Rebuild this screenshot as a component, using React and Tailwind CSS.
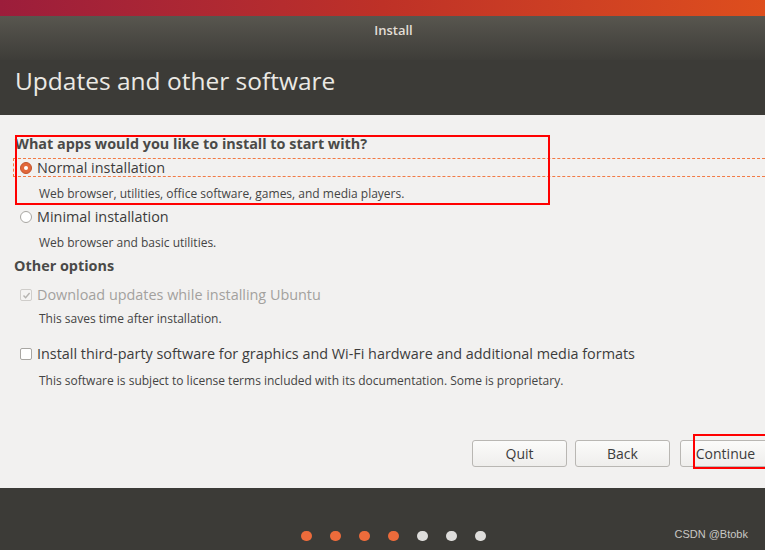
import React from "react";

const font = { fontFamily: '"Open Sans", "DejaVu Sans", sans-serif' };

function Radio({ checked }) {
  if (checked) {
    return (
      <span className="flex h-[12px] w-[12px] items-center justify-center rounded-full border border-[#c2542c] bg-[#e2673a]">
        <span className="h-[4px] w-[4px] rounded-full bg-white" />
      </span>
    );
  }
  return <span className="h-[12px] w-[12px] rounded-full border border-[#a8a6a2] bg-white" />;
}

function Check({ checked, disabled }) {
  return (
    <span
      className={
        "flex h-[12px] w-[12px] items-center justify-center rounded-[2px] border " +
        (disabled ? "border-[#cfcdca] bg-[#f4f3f2]" : "border-[#a8a6a2] bg-white")
      }
    >
      {checked && (
        <svg width="9" height="9" viewBox="0 0 9 9">
          <path d="M1.5 4.6 L3.6 6.8 L7.6 2" fill="none" stroke="#b5b3b0" strokeWidth="1.4" />
        </svg>
      )}
    </span>
  );
}

function Btn({ children, className = "" }) {
  return (
    <div
      className={
        "flex h-[27px] w-[95px] shrink-0 items-center justify-center rounded-[3px] border border-[#b9b7b3] bg-gradient-to-b from-[#fbfbfa] to-[#efeeec] text-[14px] text-[#3c3c3c] " +
        className
      }
    >
      {children}
    </div>
  );
}

export default function App() {
  const dots = ["o", "o", "o", "o", "w", "w", "w"];
  return (
    <div className="flex h-[550px] w-[765px] flex-col overflow-hidden" style={font}>
      <div className="h-[16px] shrink-0 bg-gradient-to-r from-[#9c1d3b] via-[#be3127] to-[#de4e1d]" />
      <div className="flex h-[44px] shrink-0 justify-center bg-gradient-to-b from-[#58564f] to-[#3e3d39] pl-[22px] pt-[5px]">
        <span className="text-[13px] font-semibold text-[#e2ded6]">Install</span>
      </div>
      <div className="flex h-[55px] shrink-0 items-start bg-[#3c3b37] pl-[15px] pt-[4px]">
        <span className="text-[24.5px] leading-[34px] text-[#ebe9e4]">Updates and other software</span>
      </div>
      <div className="relative flex flex-1 flex-col bg-[#f2f1f0] text-[#3c3c3c]">
        <div className="pt-[20px]" />
        <div className="flex h-[18px] items-center pl-[15px] text-[14.4px] font-bold text-[#4a4a48]">
          What apps would you like to install to start with?
        </div>
        <div className="ml-[13px] mr-[-10px] mt-[5px] flex h-[19px] items-center gap-[5px] border border-dashed border-[#f27a45] pl-[6px] pt-[1px] text-[14.4px]">
          <Radio checked />
          <span>Normal installation</span>
        </div>
        <div className="mt-[8px] flex h-[18px] items-center pl-[39px] text-[12px] text-[#444]">
          Web browser, utilities, office software, games, and media players.
        </div>
        <div className="mt-[5px] flex h-[18px] items-center gap-[5px] pl-[20px] text-[14.4px]">
          <Radio />
          <span>Minimal installation</span>
        </div>
        <div className="mt-[8px] flex h-[18px] items-center pl-[39px] text-[12px] text-[#444]">
          Web browser and basic utilities.
        </div>
        <div className="mt-[5px] flex h-[18px] items-center pl-[14px] text-[14.4px] font-bold text-[#4a4a48]">
          Other options
        </div>
        <div className="mt-[11px] flex h-[18px] items-center gap-[5px] pl-[20px] text-[14.4px] text-[#a3a19e]">
          <Check checked disabled />
          <span>Download updates while installing Ubuntu</span>
        </div>
        <div className="mt-[6px] flex h-[18px] items-center pl-[39px] text-[12px] text-[#444]">
          This saves time after installation.
        </div>
        <div className="mt-[17px] flex h-[18px] items-center gap-[5px] pl-[20px] text-[14.4px]">
          <Check />
          <span>Install third-party software for graphics and Wi-Fi hardware and additional media formats</span>
        </div>
        <div className="mt-[9px] flex h-[18px] items-center pl-[39px] text-[12px] text-[#444]">
          This software is subject to license terms included with its documentation. Some is proprietary.
        </div>
        <div className="mt-[50px] flex pl-[472px]">
          <Btn>Quit</Btn>
          <Btn className="ml-[8px] w-[94px]">Back</Btn>
          <Btn className="ml-[10px] pr-[4px]">Continue</Btn>
        </div>
        <div className="pointer-events-none absolute left-[15px] top-[20px] h-[70px] w-[535px] border-2 border-[#ff0000]" />
        <div className="pointer-events-none absolute left-[693px] top-[319px] h-[35px] w-[74px] border-2 border-[#ff0000]" />
      </div>
      <div className="relative flex h-[62px] shrink-0 items-end bg-[#3c3b37] pb-[9px]">
        <div className="flex flex-1 justify-center gap-[18px] pl-[22px]">
          {dots.map((d, i) => (
            <span
              key={i}
              className={"h-[10px] w-[11px] rounded-full " + (d === "o" ? "bg-[#ec6b3b]" : "bg-[#dedddb]")}
            />
          ))}
        </div>
        <span
          className="absolute bottom-[8px] right-[17px] text-[11px] text-[#c9c8c4]"
          style={{ fontFamily: '"Liberation Sans", Arial, sans-serif' }}
        >
          CSDN @Btobk
        </span>
      </div>
    </div>
  );
}
